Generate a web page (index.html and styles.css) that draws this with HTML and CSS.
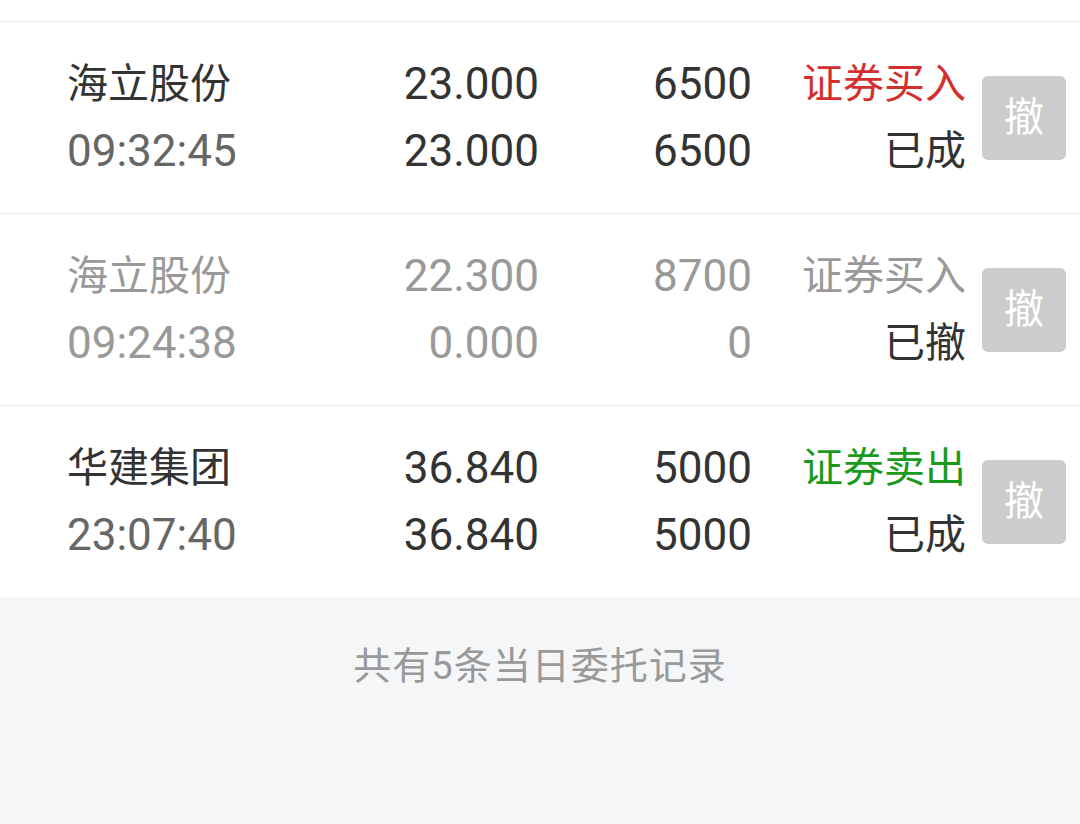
FILE: index.html
```html
<!DOCTYPE html>
<html lang="zh-CN">
<head>
<meta charset="utf-8">
<link rel="stylesheet" href="styles.css">
</head>
<body>
<div class="list">
  <div class="row-partial"></div>
  <div class="row">
    <div class="cell name">海立股份</div>
    <div class="cell num">23.000</div>
    <div class="cell num">6500</div>
    <div class="cell act buy">证券买入</div>
    <div class="btn">撤</div>
    <div class="cell time">09:32:45</div>
    <div class="cell num">23.000</div>
    <div class="cell num">6500</div>
    <div class="cell act">已成</div>
  </div>
  <div class="row muted">
    <div class="cell name">海立股份</div>
    <div class="cell num">22.300</div>
    <div class="cell num">8700</div>
    <div class="cell act">证券买入</div>
    <div class="btn">撤</div>
    <div class="cell time">09:24:38</div>
    <div class="cell num">0.000</div>
    <div class="cell num">0</div>
    <div class="cell act state">已撤</div>
  </div>
  <div class="row last">
    <div class="cell name">华建集团</div>
    <div class="cell num">36.840</div>
    <div class="cell num">5000</div>
    <div class="cell act sell">证券卖出</div>
    <div class="btn">撤</div>
    <div class="cell time">23:07:40</div>
    <div class="cell num">36.840</div>
    <div class="cell num">5000</div>
    <div class="cell act">已成</div>
  </div>
</div>
<div class="footer">共有5条当日委托记录</div>
</body>
</html>
```
FILE: styles.css
```css
html, body {
  margin: 0;
  padding: 0;
}
body {
  width: 1080px;
  height: 824px;
  overflow: hidden;
  background: #f5f6f8;
  font-family: Roboto, "Noto Sans CJK SC", sans-serif;
  color: #333333;
}
.list {
  background: #ffffff;
}
.row-partial {
  height: 21px;
  border-bottom: 1px solid #ececec;
}
.row {
  height: 191px;
  border-bottom: 1px solid #ececec;
  display: grid;
  grid-template-columns: 200px 272px 213px 214px 100px;
  grid-template-rows: 67px 67px;
  align-content: center;
  padding: 0 14px 0 67px;
}
.row.last {
  border-bottom: none;
}
.cell {
  font-size: 41px;
  line-height: 67px;
  white-space: nowrap;
}
.num, .time {
  font-size: 44px;
}
.num, .act {
  text-align: right;
}
.time {
  color: #666666;
}
.buy {
  color: #d32f2f;
}
.sell {
  color: #1a9a1a;
}
.muted .cell {
  color: #999999;
}
.muted .cell.state {
  color: #333333;
}
.btn {
  grid-column: 5;
  grid-row: 1 / span 2;
  align-self: center;
  justify-self: end;
  width: 84px;
  height: 84px;
  border-radius: 6px;
  background: #cccccc;
  color: #ffffff;
  font-size: 40px;
  line-height: 84px;
  text-align: center;
}
.footer {
  height: 227px;
  padding-top: 44px;
  box-sizing: border-box;
  text-align: center;
  font-size: 38px;
  line-height: 50px;
  color: #999999;
  letter-spacing: 1px;
}
```
